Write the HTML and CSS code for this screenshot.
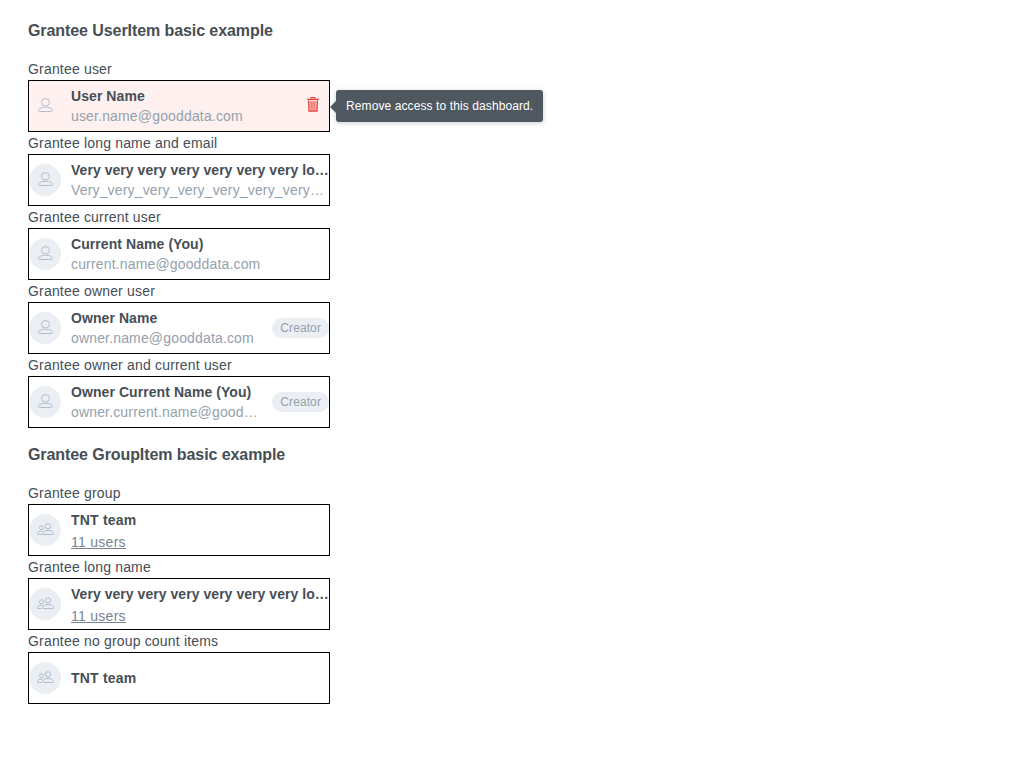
FILE: index.html
```html
<!DOCTYPE html>
<html lang="en">
<head>
<meta charset="utf-8">
<title>Grantee items</title>
<link rel="stylesheet" href="styles.css">
</head>
<body>
<svg class="defs" aria-hidden="true">
<symbol id="user" viewBox="0 0 16 16"><ellipse cx="8.500" cy="4.300" rx="4" ry="3.700"/><path d="M5.500 9.500C3 9.900 1.500 11.100 1.500 12.600c0 .6.300.9 1 .9h12c.7 0 1-.3 1-.9 0-1.500-1.500-2.700-4-3.100-1.800-.4-4.200-.4-6 0z"/></symbol>
<symbol id="group" viewBox="0 0 18 14"><circle cx="12" cy="3.300" r="2.600"/><circle cx="5.500" cy="4.800" r="2"/><path d="M7.500 11.500c-.7 0-.8-.4-.7-.9.300-1.700 1.500-2.600 3.200-2.900 1.200-.3 2.800-.3 4 0 1.800.3 3.200 1.200 3.500 2.900.1.500-.1.900-.7.900zM5.800 11.500H2.100c-.6 0-.8-.4-.7-.9.2-1.300 1.200-2 2.700-2.200.8-.2 1.700-.2 2.500 0"/></symbol>
</svg>
<main class="page">
<h2 class="title">Grantee UserItem basic example</h2>
<div class="label">Grantee user</div>
<div class="item item-hover"><span class="avatar"><svg class="icon-user"><use href="#user"/></svg></span><div class="text"><div class="name">User Name</div><div class="email">user.name@gooddata.com</div></div>
<svg class="trash" viewBox="0 0 12 15"><path class="trash-fill" d="M1.500 3.500h9l-.5 10.500H2z"/><path d="M4 1.600V.7h4v.9M0 2.400h12M1.600 3.500l.4 10.500h8l.4-10.500"/><path class="trash-bars" d="M4.200 4.500v8M6 4.500v8M7.800 4.500v8"/></svg><div class="tooltip">Remove access to this dashboard.</div></div>
<div class="label">Grantee long name and email</div>
<div class="item"><span class="avatar"><svg class="icon-user"><use href="#user"/></svg></span><div class="text"><div class="name name-long">Very very very very very very very long user name</div><div class="email">Very_very_very_very_very_very_very_long_email@gooddata.com</div></div></div>
<div class="label">Grantee current user</div>
<div class="item"><span class="avatar"><svg class="icon-user"><use href="#user"/></svg></span><div class="text"><div class="name">Current Name (You)</div><div class="email">current.name@gooddata.com</div></div></div>
<div class="label">Grantee owner user</div>
<div class="item"><span class="avatar"><svg class="icon-user"><use href="#user"/></svg></span><div class="text"><div class="name">Owner Name</div><div class="email">owner.name@gooddata.com</div></div><span class="badge">Creator</span></div>
<div class="label">Grantee owner and current user</div>
<div class="item"><span class="avatar"><svg class="icon-user"><use href="#user"/></svg></span><div class="text"><div class="name">Owner Current Name (You)</div><div class="email">owner.current.name@gooddata.com</div></div><span class="badge">Creator</span></div>
<h2 class="title title-group">Grantee GroupItem basic example</h2>
<div class="label">Grantee group</div>
<div class="item"><span class="avatar"><svg class="icon-group"><use href="#group"/></svg></span><div class="text text-group"><div class="name name-team">TNT team</div><div class="count">11 users</div></div></div>
<div class="label">Grantee long name</div>
<div class="item"><span class="avatar"><svg class="icon-group"><use href="#group"/></svg></span><div class="text text-group"><div class="name name-long">Very very very very very very very long team name</div><div class="count">11 users</div></div></div>
<div class="label">Grantee no group count items</div>
<div class="item"><span class="avatar"><svg class="icon-group"><use href="#group"/></svg></span><div class="text"><div class="name name-team">TNT team</div></div></div>
</main>
</body>
</html>
```
FILE: styles.css
```css
body { margin: 0; background: #fff; color: #464e56; font: 14px/20px "Liberation Sans", Arial, sans-serif; }
.defs { position: absolute; width: 0; height: 0; }
.page { width: 302px; padding: 20px 28px; }
.title { margin: 0 0 18px; font-size: 16px; line-height: 22px; font-weight: 700; letter-spacing: -.08px; }
.title-group { margin-top: 16px; }
.label { height: 20px; line-height: 19px; letter-spacing: .18px; }
.item { position: relative; box-sizing: border-box; display: flex; align-items: center; height: 52px; margin-bottom: 2px; border: 1px solid #000; }
.item:has(+ .title) { margin-bottom: 0; }
.item-hover { background: #fff1f0; }
.avatar { display: flex; align-items: center; justify-content: center; flex: none; width: 32px; height: 32px; border-radius: 50%; background: #ebeff4; color: #b0beca; }
.item-hover .avatar { background: none; }
.icon-user { width: 16px; height: 16px; }
.icon-group { width: 18px; height: 14px; }
.avatar svg { fill: none; stroke: currentColor; stroke-width: 1; }
.text { flex: 1; min-width: 0; margin-left: 10px; }
.text-group { padding-top: 4px; }
.name, .email { overflow: hidden; white-space: nowrap; text-overflow: ellipsis; }
.name { font-weight: 700; letter-spacing: .07px; }
.name-long { letter-spacing: .045px; }
.name-team { letter-spacing: .2px; }
.email { color: #94a1ad; letter-spacing: .16px; }
.count { color: #778491; line-height: 24px; letter-spacing: .28px; text-decoration: underline; }
.badge { margin-left: 10px; padding: 0 8px; border-radius: 10px; background: #ebeff4; color: #94a1ad; font-size: 12px; line-height: 20px; letter-spacing: .1px; }
.trash { width: 12px; height: 15px; margin: 0 10px 3px 0; fill: none; stroke: #e9473d; stroke-width: 1.3; }
.trash-fill { fill: #fbc0bb; stroke: none; }
.trash-bars { stroke-width: .8; }
.tooltip { position: absolute; left: 307px; top: 9px; padding: 0 10px; border-radius: 3px; background: #50585f; color: #fff; font-size: 12px; line-height: 32px; letter-spacing: .1px; white-space: nowrap; box-shadow: 0 1px 5px rgba(20,56,93,.25); }
.tooltip::before { content: ""; position: absolute; left: -6px; top: 11px; border: solid transparent; border-width: 6px 6px 6px 0; border-right-color: #50585f; }
```
